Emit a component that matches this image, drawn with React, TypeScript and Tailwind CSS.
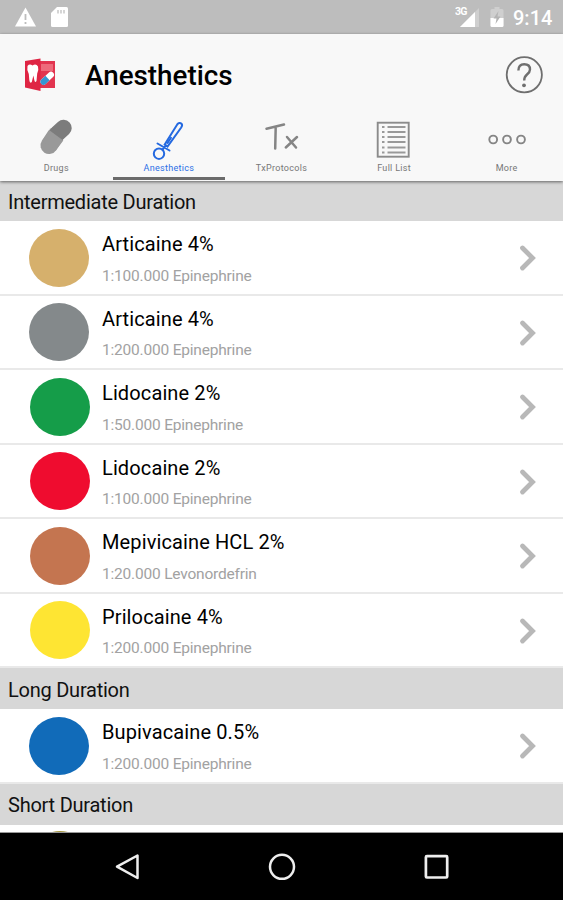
import type { ReactNode } from "react";

type Drug = { name: string; detail: string; color: string; shift?: boolean };

const intermediate: Drug[] = [
  { name: "Articaine 4%", detail: "1:100.000 Epinephrine", color: "bg-[#d6b06c]" },
  { name: "Articaine 4%", detail: "1:200.000 Epinephrine", color: "bg-[#84898b]" },
  { name: "Lidocaine 2%", detail: "1:50.000 Epinephrine", color: "bg-[#159d49]", shift: true },
  { name: "Lidocaine 2%", detail: "1:100.000 Epinephrine", color: "bg-[#ef0c2f]", shift: true },
  { name: "Mepivicaine HCL 2%", detail: "1:20.000 Levonordefrin", color: "bg-[#c47550]", shift: true },
  { name: "Prilocaine 4%", detail: "1:200.000 Epinephrine", color: "bg-[#fee533]", shift: true },
];

const long: Drug[] = [
  { name: "Bupivacaine 0.5%", detail: "1:200.000 Epinephrine", color: "bg-[#116bb9]" },
];

function StatusBar() {
  return (
    <div className="flex h-[34px] shrink-0 items-center bg-[#bdbdbd] pl-[15px] pr-[11px] text-white">
      <svg width="21" height="20" viewBox="0 0 21 20">
        <path d="M10.5 0.5 L21 19.5 H0 Z" fill="#fff" />
        <path d="M10.5 7 V13 M10.5 15 V17" stroke="#bdbdbd" strokeWidth="1.8" />
      </svg>
      <svg width="17" height="20" viewBox="0 0 17 20" className="ml-[15px]">
        <path d="M6 0 H15.5 Q17 0 17 1.5 V18.5 Q17 20 15.5 20 H1.5 Q0 20 0 18.5 V6 Z" fill="#fff" />
        <path d="M7 3 V6.5 M10 3 V6.5 M13 3 V6.5" stroke="#c8c8c8" strokeWidth="1.5" />
      </svg>
      <div className="ml-auto flex items-center">
        <svg width="26" height="22" viewBox="0 0 26 22">
          <text x="0" y="9" fontSize="10.5" fontWeight="700" fontFamily="Roboto, sans-serif" fill="#fff" textLength="12.5">3G</text>
          <path d="M24 2 V21 H5 Z" fill="#cfcfcf" />
          <path d="M20 6 V21 H5 Z" fill="#fff" />
        </svg>
        <svg width="14" height="20" viewBox="0 0 14 20" className="ml-[9px]">
          <path d="M4.5 0 H9.5 V2 H12 Q13.5 2 13.5 3.5 V18.5 Q13.5 20 12 20 H2 Q0.5 20 0.5 18.5 V3.5 Q0.5 2 2 2 H4.5 Z" fill="#cfcfcf" />
          <path d="M0.5 11 H13.5 V18.5 Q13.5 20 12 20 H2 Q0.5 20 0.5 18.5 Z" fill="#fff" />
          <path d="M8.5 4 L3.5 11.5 H6.5 L5.5 17 L10.5 9.5 H7.5 Z" fill="#b4b4b4" />
        </svg>
        <span className="ml-[9px] w-[39px] whitespace-nowrap pt-[2px] text-[20px] font-medium leading-none">9:14</span>
      </div>
    </div>
  );
}

function AppLogo() {
  return (
    <svg width="32" height="34" viewBox="0 0 32 34">
      <path d="M13 3 H31 V30 H13 Z" fill="#e2344f" />
      <path d="M17 6 H29 V13 H17 Z" fill="#ee6a7b" />
      <path d="M1 3 L16.5 0.5 V33 L1 29.5 Z" fill="#df2544" />
      <path d="M3.5 8 Q5.500 5.500 8.500 7.500 Q12 5 14 8.500 Q15 12 13.200 15.500 L12.500 23 Q11 25.500 10.300 22 L9.400 17.500 L7.800 24 Q5.800 26 5.300 22 L4.800 16 Q2.600 11.500 3.500 8 Z" fill="#fff" />
      <path d="M19.500 23.800 L27 16.800" stroke="#fff" strokeWidth="6" strokeLinecap="round" />
      <path d="M19.500 23.800 L19.600 23.700" stroke="#3596d3" strokeWidth="6" strokeLinecap="round" />
      <path d="M19.500 23.800 L23.500 20" stroke="#3596d3" strokeWidth="6" />
    </svg>
  );
}

function Tab({ label, active, children }: { label: string; active?: boolean; children: ReactNode }) {
  return (
    <div className={`flex flex-1 flex-col items-center border-b-[3px] ${active ? "border-[#6b6b6b] text-[#2b6fe6]" : "border-transparent text-[#777]"}`}>
      <svg width="50" height="46" viewBox="0 0 50 46" fill="none">{children}</svg>
      <span className="mt-[2px] text-[9px] leading-[10px] tracking-[0.3px]">{label}</span>
    </div>
  );
}

function Header() {
  return (
    <header className="relative z-10 flex h-[147px] shrink-0 flex-col bg-[#f8f8f8] shadow-[0_1px_3px_rgba(0,0,0,0.55)]">
      <div className="flex h-[81px] items-center pl-[24px] pr-[20px]">
        <AppLogo />
        <h1 className="ml-[29px] pt-[2px] text-[27.8px] font-medium leading-none text-black">Anesthetics</h1>
        <svg width="38" height="38" viewBox="0 0 38 38" fill="none" className="ml-auto" stroke="#6f6f6f">
          <circle cx="19.3" cy="18.8" r="17.6" strokeWidth="1.8" />
          <path d="M13.4 14.500 Q13.400 8.300 19.200 8.300 Q25 8.300 25 13.500 Q25 16 22 18.500 Q19.200 20.800 19.200 24.500" strokeWidth="2.400" />
          <circle cx="19" cy="29.300" r="1.900" fill="#6f6f6f" stroke="none" />
        </svg>
      </div>
      <nav className="flex flex-1 pb-[1px]">
        <Tab label="Drugs">
          <path d="M18 30.500 L24.500 20.500" stroke="#999" strokeWidth="17" strokeLinecap="round" />
          <path d="M26.500 18.500 L32.500 13" stroke="#7c7c7c" strokeWidth="16.500" strokeLinecap="round" />
          <path d="M18 30.500 L25.500 20.500" stroke="#999" strokeWidth="17" />
        </Tab>
        <Tab label="Anesthetics" active>
          <g stroke="#2469e0" strokeWidth="2" strokeLinecap="round">
            <circle cx="15" cy="38.700" r="5.200" />
            <path d="M13.500 28.500 L25.500 35.500 M18.500 34.500 L22 30.500" />
            <path d="M20.700 29.500 L33.200 9.500 Q35.400 6.800 37.500 8.700 Q38.800 10 37.200 12.500 L23.500 31.500 Z" />
            <path d="M23.500 28 L27 22.800" />
          </g>
        </Tab>
        <Tab label="TxProtocols">
          <g stroke="#858585" strokeWidth="2.500" strokeLinecap="round">
            <path d="M10.500 13.800 Q20 11.500 28 9.500 M19.700 12 L19.200 33.500" />
            <path d="M31 22 L40 32.500 M41 22 L29.800 32.500" />
          </g>
        </Tab>
        <Tab label="Full List">
          <rect x="8.700" y="7.700" width="31" height="34" stroke="#8b8b8b" strokeWidth="1.900" />
          <path d="M13 12 H15.500 M13 17 H15.500 M13 22 H15.500 M13 27 H15.500 M13 32.500 H15.500 M13 37.500 H15.500 M18.500 12 H36.500 M18.500 17 H36.500 M18.500 22 H36.500 M18.500 27 H36.500 M18.500 32.500 H36.500 M18.500 37.500 H36.500" stroke="#999" strokeWidth="1.900" />
        </Tab>
        <Tab label="More">
          <g stroke="#858585" strokeWidth="1.900">
            <circle cx="11.200" cy="24.500" r="3.900" />
            <circle cx="25" cy="24.500" r="3.900" />
            <circle cx="39" cy="24.500" r="3.900" />
          </g>
        </Tab>
      </nav>
    </header>
  );
}

function Section({ title, size }: { title: string; size: string }) {
  return (
    <div className={`flex shrink-0 items-center bg-[#d7d7d7] pl-2 pt-[2px] text-[20px] leading-none tracking-[-0.24px] text-[#111] ${size}`}>{title}</div>
  );
}

function Row({ drug }: { drug: Drug }) {
  return (
    <div className="flex h-[74.5px] shrink-0 border-b-2 border-[#e9e9e9] bg-white pr-[25px]">
      <div className={`mt-[7.5px] h-[58px] w-[60px] shrink-0 rounded-[50%] ${drug.color} ${drug.shift ? "ml-[29.5px] mr-[12.5px]" : "ml-[28.5px] mr-[13.5px]"}`} />
      <div className="flex flex-col pt-[11.4px]">
        <span className="text-[20px] leading-[24px] tracking-[0.12px] text-black">{drug.name}</span>
        <span className="mt-[9.6px] text-[15.5px] leading-[20px] tracking-[-0.2px] text-[#a2a2a2]">{drug.detail}</span>
      </div>
      <svg width="20" height="28" viewBox="0 0 20 28" fill="none" className="ml-auto mt-[23px]">
        <path d="M4.500 4 L14.500 14 L4.500 24" stroke="#b8b8b8" strokeWidth="4.800" strokeLinecap="round" />
      </svg>
    </div>
  );
}

export default function App() {
  return (
    <div className="flex h-[900px] w-[563px] flex-col overflow-hidden bg-white font-[Roboto,sans-serif]">
      <StatusBar />
      <Header />
      <main className="flex min-h-0 flex-1 flex-col overflow-hidden border-b border-[#999]">
        <Section title="Intermediate Duration" size="h-[40px]" />
        {intermediate.map((d, i) => <Row key={i} drug={d} />)}
        <Section title="Long Duration" size="h-[41px]" />
        {long.map((d, i) => <Row key={i} drug={d} />)}
        <Section title="Short Duration" size="h-[41.5px]" />
        <div className="flex shrink-0 pl-[30px] pt-[6px]">
          <div className="h-[58px] w-[60px] rounded-[50%] bg-[#a3943c]" />
        </div>
      </main>
      <footer className="flex h-[67px] shrink-0 items-center justify-between bg-black pl-[113px] pr-[112px]">
        <svg width="28" height="32" viewBox="0 0 28 32" fill="none">
          <path d="M24.500 4.500 V27 L4 15.700 Z" stroke="#eee" strokeWidth="2.500" strokeLinejoin="round" />
        </svg>
        <svg width="28" height="28" viewBox="0 0 28 28" fill="none">
          <circle cx="14" cy="13.800" r="12" stroke="#eee" strokeWidth="2.500" />
        </svg>
        <svg width="28" height="28" viewBox="0 0 28 28" fill="none">
          <rect x="2.900" y="3.200" width="21.300" height="21.300" rx="1" stroke="#eee" strokeWidth="2.700" />
        </svg>
      </footer>
    </div>
  );
}
